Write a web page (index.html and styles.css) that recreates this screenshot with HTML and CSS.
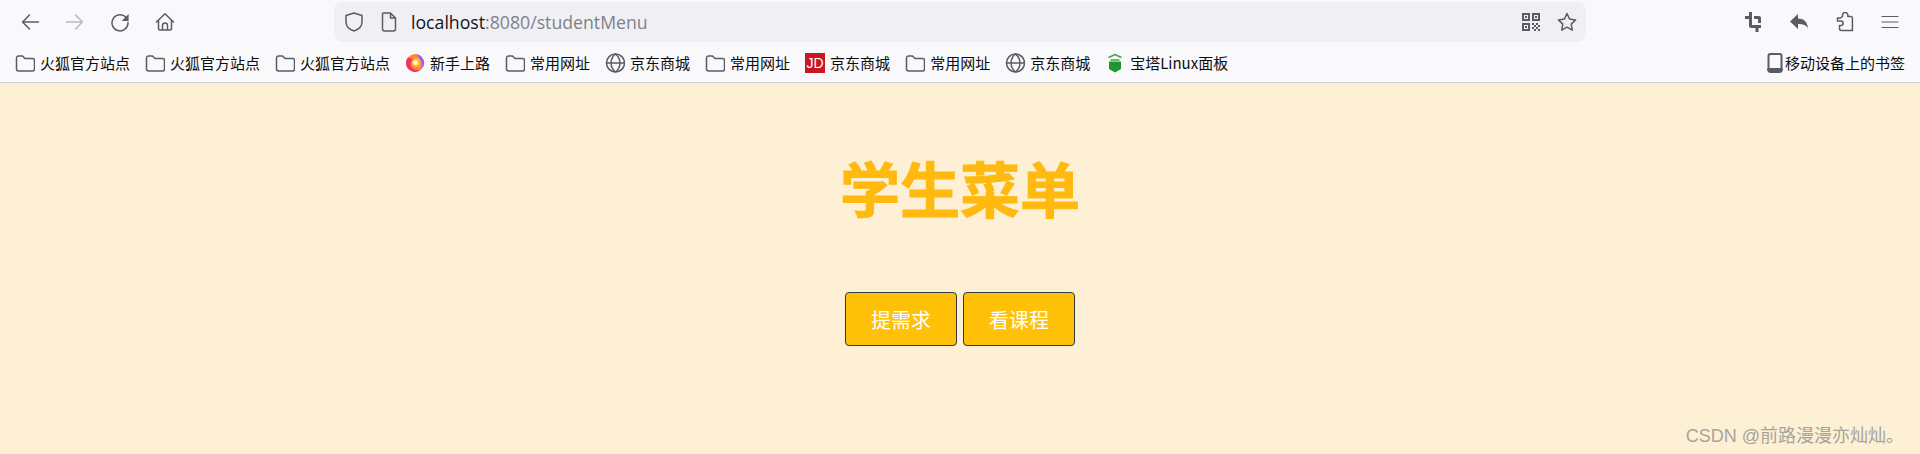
FILE: index.html
```html
<!DOCTYPE html>
<html lang="zh-CN">
<head>
<meta charset="utf-8">
<title>学生菜单</title>
<link rel="stylesheet" href="styles.css">
</head>
<body>
<header class="chrome">
  <div class="toolbar">
    <div class="nav">
      <svg class="ic" viewBox="0 0 20 20"><path d="M18.500 10H2.500M9.500 3l-7 7 7 7"/></svg>
      <svg class="ic faded" viewBox="0 0 20 20"><path d="M1.500 10h16M10.500 3l7 7-7 7"/></svg>
      <svg class="ic" viewBox="0 0 20 20"><path d="M16.500 6.200A8 8 0 1 0 18 10.600"/><path class="solid" d="M18.600 2v7h-7z"/></svg>
      <svg class="ic" viewBox="0 0 20 20"><path d="M1.500 10 10 1.800 18.500 10M3.500 8.500V16.500a1.500 1.500 0 0 0 1.500 1.500h10a1.500 1.500 0 0 0 1.500-1.500V8.500M7.500 18v-4.500a2.500 2.500 0 0 1 5 0V18"/></svg>
    </div>
    <div class="urlbar">
      <svg class="ic shield" viewBox="0 0 20 20"><path d="M10 1 2 3.500V10c0 4.500 3.500 7.500 8 9 4.500-1.500 8-4.500 8-9V3.500z"/></svg>
      <svg class="ic doc" viewBox="0 0 16 20"><path d="M2.500 1h7L14.500 6v11a2 2 0 0 1-2 2h-9a2 2 0 0 1-2-2V2a1 1 0 0 1 1-1zM9.500 1v5h5"/></svg>
      <span class="url">localhost<span class="url-dim">:8080/studentMenu</span></span>
      <svg class="qr" viewBox="0 0 18 18"><path d="M0 0h8v8H0zM2 2v4h4V2zM10 0h8v8h-8zM12 2v4h4V2zM0 10h8v8H0zM2 12v4h4v-4z" fill-rule="evenodd"/><path d="M3 3h2v2H3zM13 3h2v2h-2zM3 13h2v2H3zM10 10h2v2h-2zM14 10h2v2h-2zM12 12h2v2h-2zM16 12h2v2h-2zM10 14h2v2h-2zM14 14h2v2h-2zM12 16h2v2h-2zM16 16h2v2h-2z"/></svg>
      <svg class="ic" viewBox="0 0 20 20"><path d="M10 1.500l2.600 5.600 6 .8-4.400 4.200 1.100 6.100L10 15.200l-5.300 3 1.100-6.100L1.400 7.900l6-.8z"/></svg>
    </div>
    <div class="tools">
      <svg class="fill-ic" viewBox="0 0 20 20"><path d="M4 0h3v13h9v3h-2.500v4h-3v-4H6a2 2 0 0 1-2-2V7H0V4h4zM9 4h5a2 2 0 0 1 2 2v5h-3V7H9z"/></svg>
      <svg class="fill-ic" viewBox="0 0 20 20"><path d="M8 2v4.500c5.500 0 9.500 3 10 10-1.800-3.400-5-4.500-10-4.500V17L0 9.500z"/></svg>
      <svg class="ic" viewBox="0 0 20 20"><path d="M7.500 4.500V3.200a2.700 2.700 0 0 1 5.400 0v1.300h3a1.500 1.500 0 0 1 1.500 1.500v12.500H6.500a2 2 0 0 1-2-2v-3h1.300a2.200 2.200 0 0 0 0-4.600H2.500V6h3z"/></svg>
      <svg class="ic thin" viewBox="0 0 20 20"><path d="M2 4.500h16M2 10h16M2 15.500h16"/></svg>
    </div>
  </div>
  <nav class="bookmarks">
    <a class="bm"><svg class="ic" viewBox="0 0 20 20"><use href="#fd"/></svg>火狐官方站点</a>
    <a class="bm"><svg class="ic" viewBox="0 0 20 20"><use href="#fd"/></svg>火狐官方站点</a>
    <a class="bm"><svg class="ic" viewBox="0 0 20 20"><use href="#fd"/></svg>火狐官方站点</a>
    <a class="bm"><svg class="logo" viewBox="0 0 20 20"><circle cx="10" cy="10" r="9" fill="#ff8a2a"/><path d="M11 1a9 9 0 0 1 8 9c0 2.500-1 4.500-3 6 1.500-2.500 1.500-5.500 0-8-1-2.500-3-5-5-7z" fill="#9059ff"/><path d="M1 10a9 9 0 0 0 15 6.500C13 18 8 17 6 13 5 10 6.500 8 9 7 7 5 4 5 2.500 5A9 9 0 0 0 1 10z" fill="#f5306a"/><circle cx="11" cy="9.500" r="4.500" fill="#ffb52e"/><circle cx="10.500" cy="9.500" r="2.500" fill="#fff1d0"/></svg>新手上路</a>
    <a class="bm"><svg class="ic" viewBox="0 0 20 20"><use href="#fd"/></svg>常用网址</a>
    <a class="bm"><svg class="ic" viewBox="0 0 20 20"><use href="#gl"/></svg>京东商城</a>
    <a class="bm"><svg class="ic" viewBox="0 0 20 20"><use href="#fd"/></svg>常用网址</a>
    <a class="bm"><span class="jd">JD</span>京东商城</a>
    <a class="bm"><svg class="ic" viewBox="0 0 20 20"><use href="#fd"/></svg>常用网址</a>
    <a class="bm"><svg class="ic" viewBox="0 0 20 20"><use href="#gl"/></svg>京东商城</a>
    <a class="bm"><svg class="logo" viewBox="0 0 20 20"><path d="M4 8.500h12V16l-6 3.500L4 16z" fill="#20962f"/><path d="M3.500 4.500 10 1.500l6.500 3M5.500 7h9" fill="none" stroke="#3aa64a" stroke-width="1.400"/></svg>宝塔Linux面板</a>
    <a class="bm mobile"><svg class="ic phone" viewBox="0 0 16 20"><rect x="1.500" y="1" width="13" height="18" rx="2"/><path class="phone-base" d="M1.500 16.500h13"/></svg>移动设备上的书签</a>
  </nav>
</header>
<svg class="defs" aria-hidden="true">
  <symbol id="fd" viewBox="0 0 20 20"><path d="M1.500 5a2 2 0 0 1 2-2h4L10 5.500h7.500a2 2 0 0 1 2 2V16a2 2 0 0 1-2 2h-14a2 2 0 0 1-2-2z"/></symbol>
  <symbol id="gl" viewBox="0 0 20 20"><circle cx="10.500" cy="10" r="9"/><path d="M1.500 10h18M10.500 1c-6 5-6 13 0 18M10.500 1c6 5 6 13 0 18"/></symbol>
</svg>
<main class="content">
  <h1 class="title">学生菜单</h1>
  <div class="actions">
    <button class="btn">提需求</button>
    <button class="btn">看课程</button>
  </div>
  <div class="watermark">CSDN @前路漫漫亦灿灿。</div>
</main>
</body>
</html>
```
FILE: styles.css
```css
* { box-sizing: border-box; }
html, body { margin: 0; height: 100%; }
body {
  display: flex;
  flex-direction: column;
  height: 454px;
  overflow: hidden;
  font-family: "Noto Sans CJK SC", "Noto Sans", sans-serif;
}
.defs { display: none; }
.chrome { background: #f9f9fb; flex: none; }
.toolbar {
  height: 44px;
  display: flex;
  align-items: flex-start;
  padding-top: 2px;
}
.ic {
  width: 20px;
  height: 20px;
  flex: none;
  fill: none;
  stroke: #5b5b66;
  stroke-width: 1.500;
  stroke-linecap: round;
  stroke-linejoin: round;
}
.ic .solid { fill: #5b5b66; stroke: none; }
.ic.faded { opacity: .4; }
.ic.thin { stroke-width: 1.200; }
.nav {
  width: 334px;
  height: 40px;
  display: flex;
  align-items: center;
  gap: 25px;
  padding-left: 20px;
}
.urlbar {
  width: 1252px;
  height: 40px;
  background: #f0f0f4;
  border-radius: 8px;
  display: flex;
  align-items: center;
  padding: 0 9px 0 10px;
}
.shield { margin-right: 17px; }
.doc { width: 16px; margin-right: 14px; }
.url {
  flex: 1;
  font-family: "Open Sans", sans-serif;
  font-size: 17.7px;
  color: #15141a;
}
.url-dim { color: #80808a; }
.qr { width: 18px; height: 18px; fill: #5b5b66; margin-right: 17px; flex: none; }
.tools {
  flex: 1;
  height: 40px;
  display: flex;
  align-items: center;
  justify-content: flex-end;
  gap: 25px;
  padding-right: 20px;
}
.fill-ic { width: 20px; height: 20px; fill: #5b5b66; flex: none; }
.bookmarks {
  height: 39px;
  border-bottom: 1px solid #cfcfd8;
  display: flex;
  align-items: center;
  gap: 15px;
  padding: 0 15px;
  font-size: 15px;
  color: #0c0c10;
}
.bm { display: flex; align-items: center; gap: 5px; white-space: nowrap; line-height: 20px; }
.logo { width: 20px; height: 20px; flex: none; }
.jd {
  width: 20px;
  height: 20px;
  background: #c91623;
  color: #fff;
  font: 400 14px/20px "Liberation Sans", sans-serif;
  text-align: center;
}
.mobile { margin-left: auto; gap: 2px; }
.phone { width: 16px; height: 20px; stroke-width: 2; }
.phone-base { stroke-width: 3; }
.content {
  flex: 1;
  position: relative;
  background: #fdf0d5;
  display: flex;
  flex-direction: column;
  align-items: center;
  padding-top: 64px;
}
.title {
  margin: 0;
  font-size: 60px;
  line-height: 80px;
  font-weight: 700;
  color: #ffb90f;
  -webkit-text-stroke: 1px #ffb90f;
}
.actions { display: flex; gap: 6px; margin-top: 65px; }
.btn {
  width: 112px;
  height: 54px;
  padding: 0;
  background: #ffc107;
  border: 1px solid #343a40;
  border-radius: 4px;
  color: #fff;
  font-family: inherit;
  font-size: 20px;
}
.watermark {
  position: absolute;
  right: 16px;
  bottom: 5px;
  font-family: "Liberation Sans", "Noto Sans CJK SC", sans-serif;
  font-size: 18px;
  line-height: 26px;
  color: #a8a49c;
}
```
